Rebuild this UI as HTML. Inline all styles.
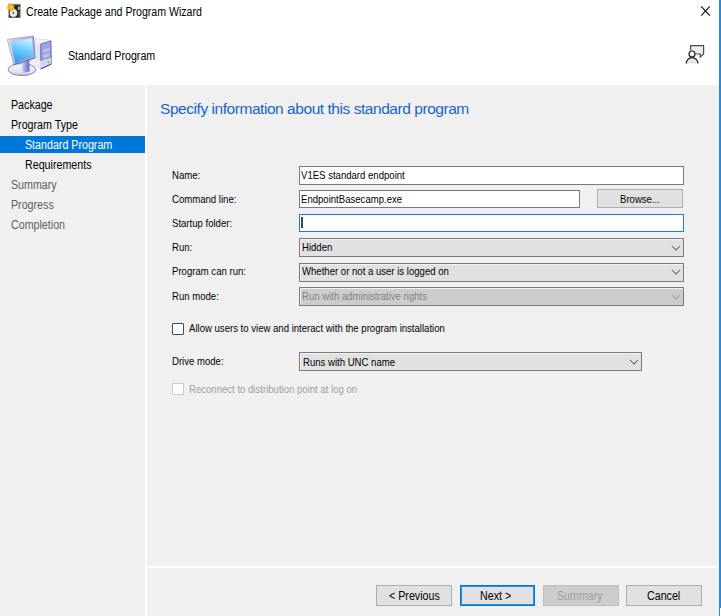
<!DOCTYPE html>
<html><head><meta charset="utf-8">
<style>
html,body{margin:0;padding:0;}
body{width:721px;height:616px;overflow:hidden;position:relative;background:#F0F0F0;font-family:"Liberation Sans",sans-serif;}
.a{position:absolute;}
.t{position:absolute;white-space:nowrap;line-height:normal;}
.seg{font-size:12px;transform:scaleX(0.89);transform-origin:0 0;}
.frm{font-size:11px;transform:scaleX(0.87);transform-origin:0 0;color:#000;}
.box{position:absolute;box-sizing:border-box;background:#fff;border:1px solid #7A7A7A;}
.cmb{position:absolute;box-sizing:border-box;background:#E1E1E1;border:1px solid #7A7A7A;box-shadow:inset 1px 1px 0 #F2F2F2;}
.btn{position:absolute;box-sizing:border-box;background:#E1E1E1;border:1px solid #ADADAD;}
</style></head>
<body>
<!-- header -->
<div class="a" style="left:0;top:0;width:721px;height:85px;background:#fff;"></div>
<div class="a" style="left:719px;top:0;width:2px;height:616px;background:#2B88D8;"></div>
<div class="a" style="left:720px;top:608px;width:1px;height:8px;background:#fff;"></div>

<!-- title icon -->
<svg class="a" style="left:0;top:0" width="24" height="22" viewBox="0 0 24 22">
  <defs>
    <radialGradient id="sun" cx="0.5" cy="0.45" r="0.6"><stop offset="0" stop-color="#ffe030"/><stop offset="0.6" stop-color="#f8b010"/><stop offset="1" stop-color="#f09020"/></radialGradient>
    <radialGradient id="cd" cx="0.5" cy="0.5" r="0.5"><stop offset="0.15" stop-color="#555"/><stop offset="0.3" stop-color="#ddd"/><stop offset="0.7" stop-color="#f4f0ff"/><stop offset="1" stop-color="#c8e8d0"/></radialGradient>
  </defs>
  <rect x="8.3" y="3.8" width="12.4" height="14" fill="#7a7ec0"/>
  <rect x="9" y="5.2" width="11" height="12.2" fill="#1a1a22"/>
  <rect x="17.8" y="6.5" width="2" height="3.5" fill="#e8b820"/>
  <rect x="18" y="11" width="1.8" height="6" fill="#2a6a30"/>
  <circle cx="13.4" cy="13" r="3.9" fill="url(#cd)"/>
  <path d="M10.80 2.70 L11.73 4.65 L13.62 3.62 L13.23 5.74 L15.37 6.02 L13.80 7.50 L15.37 8.98 L13.23 9.26 L13.62 11.38 L11.73 10.35 L10.80 12.30 L9.87 10.35 L7.98 11.38 L8.37 9.26 L6.23 8.98 L7.80 7.50 L6.23 6.02 L8.37 5.74 L7.98 3.62 L9.87 4.65 Z" fill="#f8b418" opacity="0.85"/>
  <circle cx="10.8" cy="7.5" r="3" fill="url(#sun)"/>
</svg>
<div class="t" style="left:25.6px;top:5.4px;color:#000;font-size:12px;transform:scaleX(0.882);transform-origin:0 0;">Create Package and Program Wizard</div>
<!-- close -->
<svg class="a" style="left:690px;top:0" width="30" height="30" viewBox="690 0 30 30">
  <path d="M701.2 6.4 L709.8 15.6 M709.8 6.4 L701.2 15.6" stroke="#1a1a1a" stroke-width="1.25"/>
</svg>
<!-- monitor icon -->
<svg class="a" style="left:0;top:25px" width="60" height="60" viewBox="0 25 60 60">
  <defs>
    <linearGradient id="scr" x1="0.6" y1="0" x2="0.3" y2="1">
      <stop offset="0" stop-color="#c4f2ff"/><stop offset="0.45" stop-color="#6ccaf8"/><stop offset="1" stop-color="#3496ec"/>
    </linearGradient>
    <linearGradient id="front" x1="0" y1="0" x2="0" y2="1">
      <stop offset="0" stop-color="#a4a4e2"/><stop offset="1" stop-color="#8c8cd4"/>
    </linearGradient>
    <linearGradient id="base" x1="0" y1="0" x2="0" y2="1">
      <stop offset="0" stop-color="#f8f8fc"/><stop offset="0.7" stop-color="#e4e4f0"/><stop offset="1" stop-color="#b8b8dc"/>
    </linearGradient>
    <linearGradient id="neck" x1="0" y1="0" x2="1" y2="0">
      <stop offset="0" stop-color="#d8d8f4"/><stop offset="0.5" stop-color="#a0a0e0"/><stop offset="1" stop-color="#6a6ac4"/>
    </linearGradient>
    <linearGradient id="frame" x1="0" y1="0" x2="1" y2="0">
      <stop offset="0" stop-color="#e6e6f2"/><stop offset="0.2" stop-color="#c8c8e6"/><stop offset="1" stop-color="#a8a8da"/>
    </linearGradient>
  </defs>
  <!-- tower side/top -->
  <path d="M31 38.5 L50.5 40.5 L51.5 64 L41 68.8 L31 62 Z" fill="#e4e4f4" stroke="#a0a0d0" stroke-width="0.6"/>
  <path d="M31 38.5 L50.5 40.5 L40.6 44 L31 42 Z" fill="#f4f4fc"/>
  <!-- tower front -->
  <path d="M40.6 44 L51 40.8 L51.3 64 L40.8 68.8 Z" fill="url(#front)" stroke="#5a5aa8" stroke-width="0.7"/>
  <path d="M43 49.5 L49.5 47.5 L49.5 51.3 L43 53.3 Z M43 54.8 L49.5 52.8 L49.5 56.6 L43 58.6 Z" fill="#bcbcec"/>
  <path d="M40.8 61 L51.2 57.5 L51.3 64 L40.8 68.8 Z" fill="#d4d4f0"/>
  <path d="M31 58.5 L40.8 61 L40.8 68.8 L31 62.5 Z" fill="#eeeef8"/>
  <circle cx="48.6" cy="62.2" r="1.1" fill="#6ddc4a"/>
  <path d="M40.8 68.8 L51.3 64" stroke="#40409a" stroke-width="1"/>
  <!-- base -->
  <ellipse cx="22" cy="69.6" rx="13.8" ry="6" fill="url(#base)" stroke="#7878bc" stroke-width="0.9"/>
  <!-- neck -->
  <path d="M21 60.5 L29.5 58 L29.5 71.5 L23 73 Z" fill="url(#neck)"/>
  <!-- monitor frame -->
  <path d="M7.3 39.4 L33.4 35.9 L35 57.7 L13.6 64.7 Z" fill="url(#frame)" stroke="#9a9ad0" stroke-width="0.7"/>
  <path d="M13.6 64.7 L35 57.7" stroke="#6464b4" stroke-width="1"/>
  <path d="M33.4 35.9 L35 57.7" stroke="#8080c4" stroke-width="0.8"/>
  <!-- screen -->
  <path d="M10.8 42.1 L31.9 38.2 L33.8 55.8 L15.1 63.2 Z" fill="url(#scr)"/>
</svg>
<div class="t seg" style="left:68.3px;top:49.2px;color:#000;">Standard Program</div>

<!-- feedback icon -->
<svg class="a" style="left:680px;top:40px" width="30" height="30" viewBox="680 40 30 30">
  <path d="M690.6 50.5 L690.6 45.7 L703.6 45.7 L703.6 54 L700.2 57.2 L700.2 54 L695.5 54" fill="#EDEDED" stroke="#4a4a4a" stroke-width="1.2"/>
  <circle cx="692" cy="54" r="3" fill="#F2F2F2" stroke="#1a1a1a" stroke-width="1.2"/>
  <path d="M686.2 63.6 A5.9 5.9 0 0 1 698 63.6" fill="#E6E6E6" stroke="#1a1a1a" stroke-width="1.2"/>
</svg>
<!-- separators -->
<div class="a" style="left:145px;top:85px;width:2px;height:531px;background:#FFFFFF;"></div>
<div class="a" style="left:147px;top:566px;width:572px;height:2px;background:#FFFFFF;"></div>

<!-- nav -->
<div class="a" style="left:0;top:136px;width:145px;height:17px;background:#0078D7;"></div>
<div class="t seg" style="left:11px;top:98.4px;color:#000;">Package</div>
<div class="t seg" style="left:11px;top:118.4px;color:#000;">Program Type</div>
<div class="t seg" style="left:25px;top:138.4px;color:#fff;">Standard Program</div>
<div class="t seg" style="left:25px;top:158.4px;color:#000;">Requirements</div>
<div class="t seg" style="left:11px;top:178.4px;color:#5E5E5E;">Summary</div>
<div class="t seg" style="left:11px;top:198.4px;color:#5E5E5E;">Progress</div>
<div class="t seg" style="left:11px;top:218.4px;color:#5E5E5E;">Completion</div>

<!-- heading -->
<div class="t" style="left:160px;top:100px;font-size:15.5px;color:#1863CC;letter-spacing:-0.45px;">Specify information about this standard program</div>

<!-- labels -->
<div class="t frm" style="left:171.7px;top:169px;">Name:</div>
<div class="t frm" style="left:171.7px;top:193px;">Command line:</div>
<div class="t frm" style="left:171.7px;top:217px;">Startup folder:</div>
<div class="t frm" style="left:171.7px;top:241px;">Run:</div>
<div class="t frm" style="left:171.7px;top:265px;">Program can run:</div>
<div class="t frm" style="left:171.7px;top:290px;">Run mode:</div>

<!-- inputs -->
<div class="box" style="left:299px;top:166px;width:385px;height:19px;"></div>
<div class="t frm" style="left:301px;top:169px;">V1ES standard endpoint</div>
<div class="box" style="left:299px;top:190px;width:281px;height:18px;"></div>
<div class="t frm" style="left:301px;top:193px;">EndpointBasecamp.exe</div>
<div class="btn" style="left:597px;top:189px;width:86px;height:19px;"></div>
<div class="t frm" style="left:619.7px;top:193px;">Browse...</div>
<div class="box" style="left:299px;top:214px;width:385px;height:18px;border-color:#1A7FDA;"></div>
<div class="a" style="left:301.4px;top:217px;width:1.4px;height:11px;background:#4a4a4a;"></div>

<div class="cmb" style="left:299px;top:238px;width:385px;height:19px;"></div>
<div class="t frm" style="left:302px;top:241px;">Hidden</div>
<div class="cmb" style="left:299px;top:263px;width:385px;height:19px;"></div>
<div class="t frm" style="left:302px;top:265px;">Whether or not a user is logged on</div>
<div class="cmb" style="left:299px;top:287px;width:385px;height:19px;background:#CCCCCC;"></div>
<div class="t frm" style="left:302px;top:290px;color:#838383;">Run with administrative rights</div>

<svg class="a" style="left:671px;top:244.6px" width="10" height="6" viewBox="0 0 10 6"><path d="M1 1 L5 5 L9 1" fill="none" stroke="#5a5a5a" stroke-width="1.05"/></svg>
<svg class="a" style="left:671px;top:268.8px" width="10" height="6" viewBox="0 0 10 6"><path d="M1 1 L5 5 L9 1" fill="none" stroke="#5a5a5a" stroke-width="1.05"/></svg>
<svg class="a" style="left:671px;top:293.5px" width="10" height="6" viewBox="0 0 10 6"><path d="M1 1 L5 5 L9 1" fill="none" stroke="#A8A8A8" stroke-width="1.3"/></svg>
<!-- checkbox -->
<div class="a" style="left:171.8px;top:322.6px;width:12px;height:12px;box-sizing:border-box;border:1px solid #4a4a4a;background:#fff;border-radius:1px;"></div>
<div class="t frm" style="left:189px;top:322px;">Allow users to view and interact with the program installation</div>

<div class="t frm" style="left:171.7px;top:355px;">Drive mode:</div>
<div class="cmb" style="left:299px;top:352px;width:343px;height:19px;"></div>
<div class="t frm" style="left:303px;top:356px;">Runs with UNC name</div>
<svg class="a" style="left:628.5px;top:358.6px" width="10" height="6" viewBox="0 0 10 6"><path d="M1 1 L5 5 L9 1" fill="none" stroke="#5a5a5a" stroke-width="1.05"/></svg>

<div class="a" style="left:172px;top:383px;width:12px;height:12px;box-sizing:border-box;border:1px solid #CCCCCC;background:#fff;"></div>
<div class="t frm" style="left:189px;top:383px;color:#A0A0A0;">Reconnect to distribution point at log on</div>

<!-- bottom buttons -->
<div class="btn" style="left:376px;top:585px;width:76px;height:21px;"></div>
<div class="t seg" style="left:389.2px;top:589.1px;">&lt; Previous</div>
<div class="btn" style="left:460px;top:585px;width:75px;height:21px;border:1px solid #0078D7;box-shadow:inset 0 0 0 1px rgba(0,120,215,0.8);"></div>
<div class="t seg" style="left:480.3px;top:589.1px;">Next &gt;</div>
<div class="btn" style="left:543px;top:585px;width:76px;height:21px;background:#CCCCCC;border-color:#BFBFBF;"></div>
<div class="t seg" style="left:556.8px;top:589.1px;color:#A0A0A0;">Summary</div>
<div class="btn" style="left:626px;top:585px;width:76px;height:21px;"></div>
<div class="t seg" style="left:646.6px;top:589.1px;">Cancel</div>
</body></html>
